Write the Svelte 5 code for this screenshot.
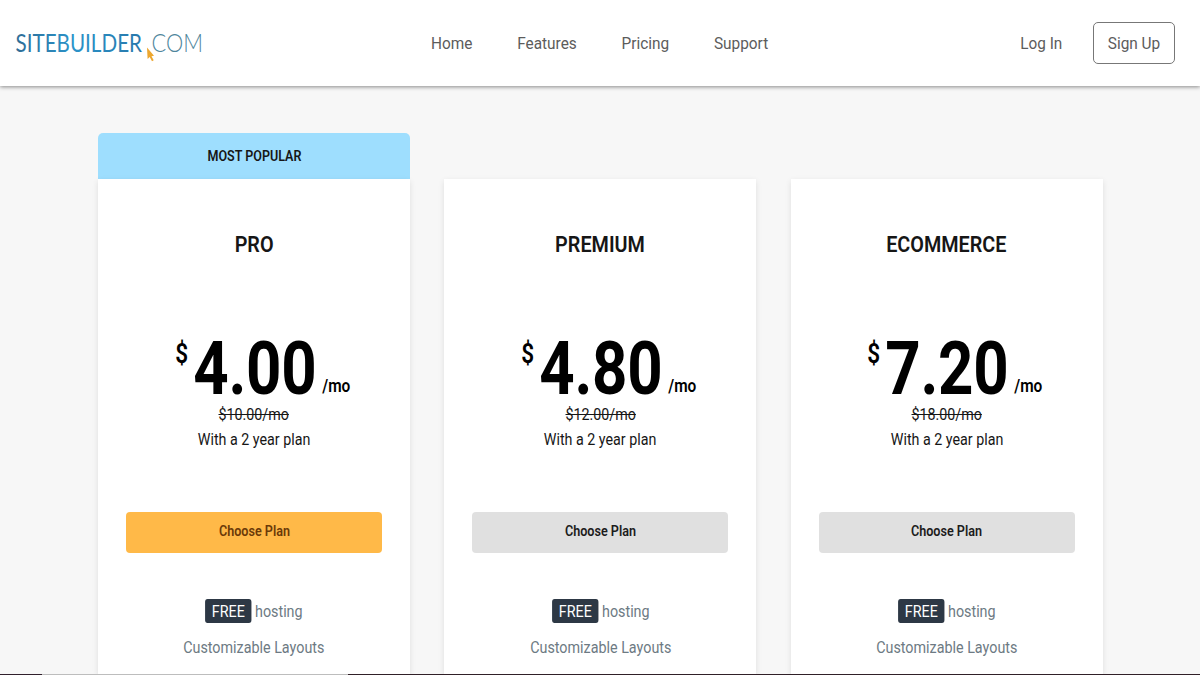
<script lang="ts">
    type Plan = {
        name: string;
        price: string;
        oldPrice: string;
        popular: boolean;
    };
    const links = ["Home", "Features", "Pricing", "Support"];
    const plans: Plan[] = [
        { name: "PRO", price: "4.00", oldPrice: "$10.00/mo", popular: true },
        { name: "PREMIUM", price: "4.80", oldPrice: "$12.00/mo", popular: false },
        { name: "ECOMMERCE", price: "7.20", oldPrice: "$18.00/mo", popular: false },
    ];
</script>

<div class="page">
    <header>
        <svg class="logo" width="200" height="40" viewBox="0 0 200 40">
            <defs>
                <linearGradient id="brand" x1="0" x2="1" y1="0" y2="0">
                    <stop offset="0" stop-color="#2f6c96" />
                    <stop offset="0.45" stop-color="#2b93c9" />
                    <stop offset="1" stop-color="#2878ab" />
                </linearGradient>
            </defs>
            <text class="site" x="5.5" y="26" textLength="126.5" lengthAdjust="spacingAndGlyphs">SITEBUILDER</text>
            <text class="com" x="141.5" y="26" textLength="51.5" lengthAdjust="spacingAndGlyphs">COM</text>
            <path d="M137 21.5 L137.6 33 L139.7 31 L142 35.3 L143.7 34.3 L141.5 30.3 L144 29.8 Z" fill="#eda72f" />
        </svg>
        <nav>
            {#each links as link}
                <a href="#top">{link}</a>
            {/each}
        </nav>
        <div class="account">
            <a href="#top" class="login">Log In</a>
            <button class="signup"><span class="narrow">Sign Up</span></button>
        </div>
    </header>

    <main>
        {#each plans as plan}
            <section>
                <div class={plan.popular ? "ribbon popular" : "ribbon"}>
                    {#if plan.popular}<span class="narrow">MOST POPULAR</span>{/if}
                </div>
                <div class="card">
                    <h2 class="narrow">{plan.name}</h2>
                    <div class="price">
                        <span class="currency">$</span>
                        <span class="amount">{plan.price}</span>
                        <span class="period">/mo</span>
                    </div>
                    <div class="old narrow"><s>{plan.oldPrice}</s></div>
                    <div class="term narrow">With a 2 year plan</div>
                    <button class={plan.popular ? "choose primary" : "choose"}>
                        <span>Choose Plan</span>
                    </button>
                    <div class="feature hosting"><span class="free">FREE</span>hosting</div>
                    <div class="feature">Customizable Layouts</div>
                </div>
            </section>
        {/each}
    </main>
    <div class="edge"></div>
</div>

<style>
    :global(body) {
        margin: 0;
    }
    .page {
        display: flex;
        flex-direction: column;
        height: 675px;
        overflow: hidden;
        background: #f7f7f7;
        font-family: Roboto, "Liberation Sans", sans-serif;
        color: #161616;
    }
    header {
        display: grid;
        grid-template-columns: 431px 1fr auto;
        align-items: center;
        flex: none;
        height: 86px;
        background: #fff;
        box-shadow: 0 1px 4px rgba(0, 0, 0, 0.45);
    }
    .logo {
        margin-left: 10px;
        margin-top: 6px;
    }
    .site {
        font: 400 25px Lato, sans-serif;
        fill: url(#brand);
    }
    .com {
        font: 300 25px Lato, sans-serif;
        fill: #4f869c;
    }
    /* condensed look for the site's Roboto text */
    .narrow {
        display: inline-block;
        transform: scaleX(0.88);
    }
    nav {
        display: flex;
        gap: 49.5px;
        transform: scaleX(0.905);
        transform-origin: left;
    }
    a {
        color: #5c5c5c;
        font-size: 17px;
        text-decoration: none;
    }
    .account {
        display: flex;
        align-items: center;
        gap: 28px;
        margin-right: 25px;
    }
    .login {
        transform: scaleX(0.9);
    }
    .signup {
        box-sizing: border-box;
        width: 82px;
        height: 42px;
        padding: 0;
        border: 1px solid #777;
        border-radius: 5px;
        background: #fff;
        color: #5c5c5c;
        font: 17px Roboto, sans-serif;
        white-space: nowrap;
    }
    .signup .narrow {
        transform: scaleX(0.905);
    }
    main {
        display: grid;
        grid-template-columns: repeat(3, 312px);
        gap: 34.4px;
        flex: 1;
        min-height: 0;
        padding: 47px 0 0 98px;
    }
    section {
        display: flex;
        flex-direction: column;
    }
    .ribbon {
        height: 46px;
        flex: none;
        text-align: center;
        line-height: 46px;
        font-size: 14px;
        font-weight: 600;
    }
    .ribbon .narrow {
        transform: scaleX(0.895);
    }
    .popular {
        border-radius: 5px 5px 0 0;
        background: #9edefe;
    }
    .card {
        display: flex;
        flex-direction: column;
        align-items: center;
        flex: 1;
        background: #fff;
        box-shadow: 0 2px 6px rgba(0, 0, 0, 0.1);
    }
    h2 {
        margin: 50px 0 0;
        font-size: 22.5px;
        font-weight: 600;
        line-height: 30px;
    }
    .price {
        display: flex;
        align-items: flex-start;
        height: 70px;
        margin-top: 73px;
        margin-left: 17px;
        color: #000;
        transform: scaleX(0.835);
    }
    .currency {
        margin-right: 6px;
        font-size: 27px;
        font-weight: 600;
        line-height: 44px;
    }
    .amount {
        margin-top: 6px;
        font-size: 74px;
        font-weight: 700;
        line-height: 62px;
        letter-spacing: -0.3px;
    }
    .period {
        margin-top: 42px;
        margin-left: 7px;
        font-size: 18.5px;
        font-weight: 600;
        line-height: 24px;
    }
    .old,
    .term {
        font-size: 16.5px;
        line-height: 25px;
    }
    .old {
        transform: scaleX(0.865);
    }
    .term {
        transform: scaleX(0.865);
    }
    .choose {
        width: 256px;
        height: 41px;
        flex: none;
        margin-top: 60px;
        padding: 0 0 3px;
        border: 0;
        border-radius: 4px;
        background: #e0e0e0;
        color: #1c1c1c;
        font: 600 14px Roboto, sans-serif;
    }
    .choose span {
        display: inline-block;
        transform: scaleX(0.9);
    }
    .primary {
        background: #ffb948;
        color: #6b3a08;
    }
    .feature {
        margin-top: 12px;
        color: #6d7a83;
        font-size: 17px;
        line-height: 24px;
        transform: scaleX(0.843);
    }
    .hosting {
        margin-top: 46px;
    }
    .free {
        display: inline-block;
        margin-right: 4px;
        padding: 0 8px;
        border-radius: 3px;
        background: #2d3845;
        color: #fff;
    }
    .edge {
        flex: none;
        height: 1px;
        background: linear-gradient(90deg, #30202c 42px, #bdbdbd 42px 348px, #302028 348px);
        z-index: 1;
    }
</style>
